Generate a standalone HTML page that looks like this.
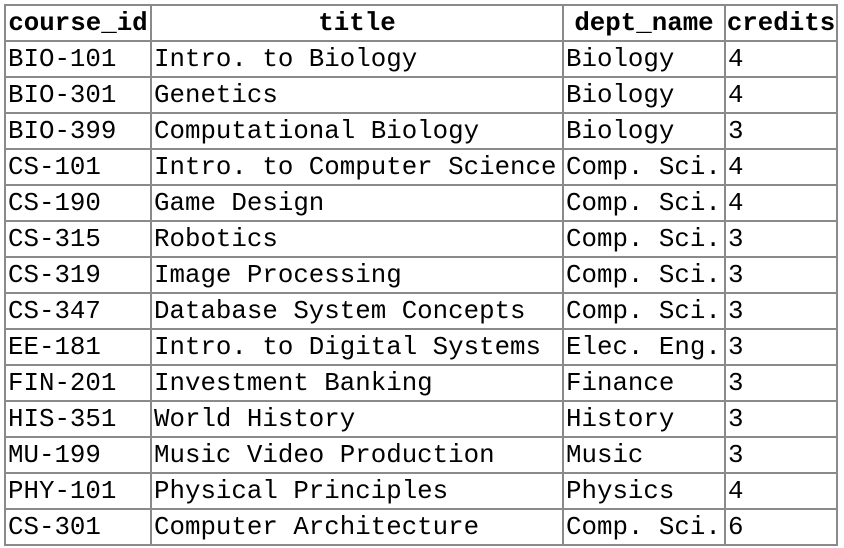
<!DOCTYPE html>
<html><head><style>
body{margin:0;background:#fff;width:844px;height:548px;overflow:hidden}
table{position:absolute;left:4px;top:4px;border-collapse:collapse;font-family:"Liberation Mono","Courier New",monospace;font-size:25.8px;color:#000}
td,th{border:2px solid #8a8a8a;height:34px;padding:2px 0 0 2px;text-align:left;white-space:nowrap;line-height:32px;box-sizing:border-box}
th{text-align:center;font-weight:bold;padding:2px 0 0 0}
tr{height:36px}
</style></head><body>
<table>
<colgroup><col style="width:146px"><col style="width:412px"><col style="width:162px"><col style="width:112px"></colgroup>
<tr><th>course_id</th><th>title</th><th>dept_name</th><th>credits</th></tr>
<tr><td>BIO-101</td><td>Intro. to Biology</td><td>Biology</td><td>4</td></tr>
<tr><td>BIO-301</td><td>Genetics</td><td>Biology</td><td>4</td></tr>
<tr><td>BIO-399</td><td>Computational Biology</td><td>Biology</td><td>3</td></tr>
<tr><td>CS-101</td><td>Intro. to Computer Science</td><td>Comp. Sci.</td><td>4</td></tr>
<tr><td>CS-190</td><td>Game Design</td><td>Comp. Sci.</td><td>4</td></tr>
<tr><td>CS-315</td><td>Robotics</td><td>Comp. Sci.</td><td>3</td></tr>
<tr><td>CS-319</td><td>Image Processing</td><td>Comp. Sci.</td><td>3</td></tr>
<tr><td>CS-347</td><td>Database System Concepts</td><td>Comp. Sci.</td><td>3</td></tr>
<tr><td>EE-181</td><td>Intro. to Digital Systems</td><td>Elec. Eng.</td><td>3</td></tr>
<tr><td>FIN-201</td><td>Investment Banking</td><td>Finance</td><td>3</td></tr>
<tr><td>HIS-351</td><td>World History</td><td>History</td><td>3</td></tr>
<tr><td>MU-199</td><td>Music Video Production</td><td>Music</td><td>3</td></tr>
<tr><td>PHY-101</td><td>Physical Principles</td><td>Physics</td><td>4</td></tr>
<tr><td>CS-301</td><td>Computer Architecture</td><td>Comp. Sci.</td><td>6</td></tr>
</table>
</body></html>
